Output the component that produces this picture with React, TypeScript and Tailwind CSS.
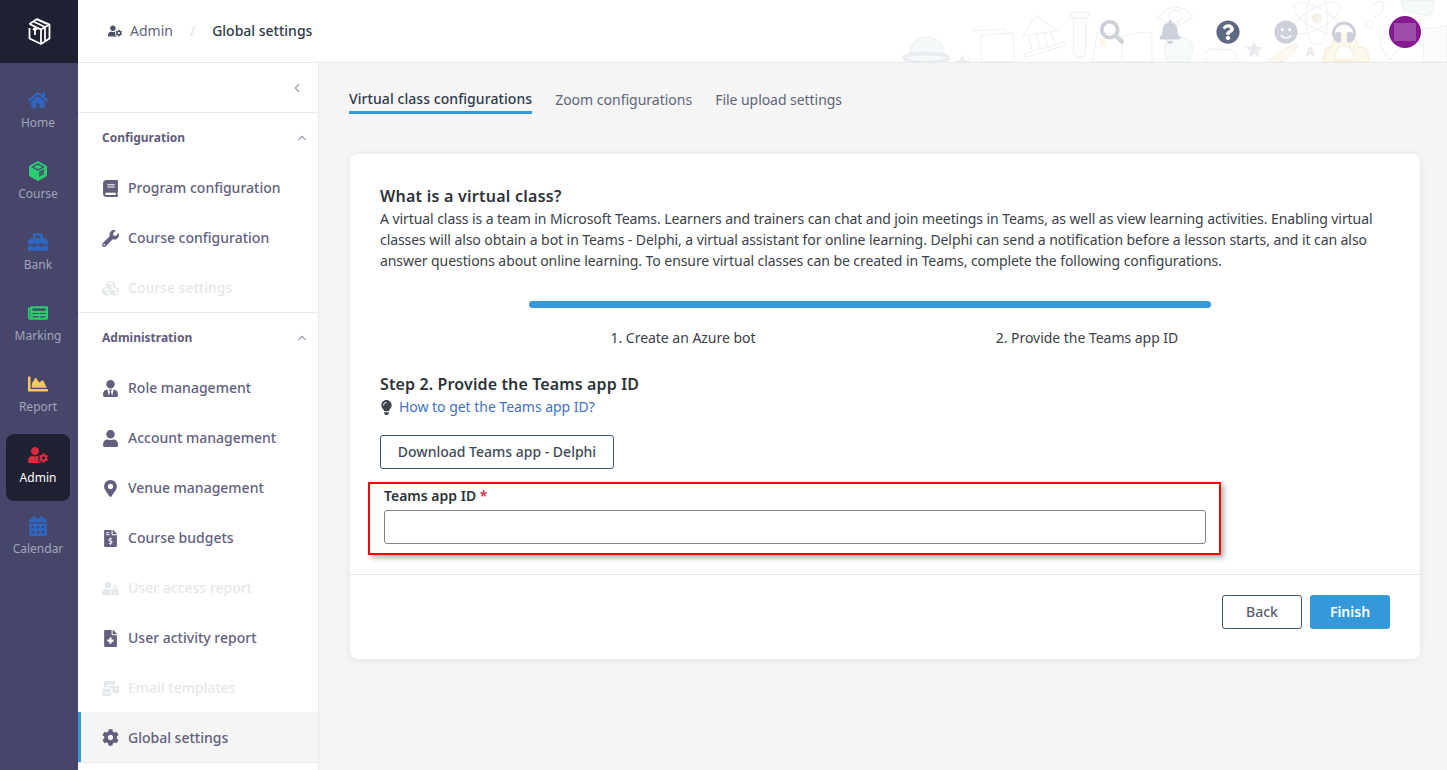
import type { IconType } from 'react-icons';
import { ChevronUp, ChevronLeft } from 'lucide-react';
import {
  FaHome, FaToolbox, FaNewspaper, FaChartArea, FaUserCog, FaCalendarAlt,
  FaBook, FaWrench, FaCubes, FaUserTie, FaUser, FaMapMarkerAlt, FaFileInvoiceDollar,
  FaUserLock, FaFileMedical, FaMailBulk, FaCog, FaSearch, FaBell, FaQuestionCircle,
  FaSmile, FaHeadphones, FaLightbulb,
} from 'react-icons/fa';

function CourseIcon({ className }: { className?: string }) {
  return (
    <svg className={className} viewBox="0 0 20 20">
      <path d="M10 0 L19 5 L19 15 L10 20 L1 15 L1 5 Z" fill="currentColor" />
      <path d="M10 3 L15.5 6 L10 9 L4.5 6 Z" fill="none" stroke="#45466a" strokeWidth="1.2" />
      <path d="M11 10.5 L16 7.8 L16 13.3 L11 16 Z" fill="#45466a" opacity="0.75" />
    </svg>
  );
}

const railItems: { label: string; icon: React.ComponentType<{ className?: string }>; color: string; active?: boolean }[] = [
  { label: 'Home', icon: FaHome, color: 'text-[#2f66c0]' },
  { label: 'Course', icon: CourseIcon, color: 'text-[#2ecc71]' },
  { label: 'Bank', icon: FaToolbox, color: 'text-[#2f66c0]' },
  { label: 'Marking', icon: FaNewspaper, color: 'text-[#2ecc71]' },
  { label: 'Report', icon: FaChartArea, color: 'text-[#f9c85c]' },
  { label: 'Admin', icon: FaUserCog, color: 'text-[#dc2a3e]', active: true },
  { label: 'Calendar', icon: FaCalendarAlt, color: 'text-[#2f66c0]' },
];

const configItems: { label: string; icon: IconType; disabled?: boolean }[] = [
  { label: 'Program configuration', icon: FaBook },
  { label: 'Course configuration', icon: FaWrench },
  { label: 'Course settings', icon: FaCubes, disabled: true },
];

const adminItems: { label: string; icon: IconType; disabled?: boolean; active?: boolean }[] = [
  { label: 'Role management', icon: FaUserTie },
  { label: 'Account management', icon: FaUser },
  { label: 'Venue management', icon: FaMapMarkerAlt },
  { label: 'Course budgets', icon: FaFileInvoiceDollar },
  { label: 'User access report', icon: FaUserLock, disabled: true },
  { label: 'User activity report', icon: FaFileMedical },
  { label: 'Email templates', icon: FaMailBulk, disabled: true },
  { label: 'Global settings', icon: FaCog, active: true },
];

function Logo() {
  return (
    <svg width="23" height="27" viewBox="0 0 23 27" fill="none" stroke="white" strokeWidth="1.8" strokeLinejoin="round">
      <path d="M1.5 6 L9 1 L21.5 6.5 L21.5 20.5 L13 26 L1.5 20.5 L1.5 10" />
      <path d="M1.5 6 L13 11.5 L21.5 6.5 M13 11.5 L13 26" />
      <path d="M5.5 3.5 L17 9 M9 1.5 L19 6 M17 9.5 L17 23" />
      <path d="M7 10 L7 17 M5 12 L7 9.5 L9 12" />
    </svg>
  );
}

// faint doodles behind the header icons
function HeaderDoodles() {
  return (
    <svg className="absolute right-0 top-0" width="567" height="62" viewBox="0 0 1568 171" fill="none" stroke="#eef0f3" strokeWidth="3">
      <circle cx="130" cy="150" r="48" fill="#f5f9f9" />
      <ellipse cx="128" cy="160" rx="62" ry="12" stroke="#eaecef" strokeWidth="9" />
      <path d="M228 152 l6 14 15 2 -10 10 -22 0 -10 -10 15 -2z" fill="#e8eaee" stroke="none" />
      <path d="M255 85 L345 80 L348 92 M278 98 L368 90 L372 171 L282 171 Z" fill="#fff" />
      <path d="M395 100 L432 42 L490 85 Z M398 150 L510 115 L512 125 L402 158 Z M410 100 L422 145 M432 92 L444 138 M452 86 L464 130 M472 82 L484 124" />
      <path d="M527 40 Q527 34 535 34 L570 34 Q577 34 577 42 Q577 50 570 50 L535 50 Q527 50 527 40 Z M535 50 L535 145 Q552 172 570 145 L570 50" fill="#fbfdfd" />
      <path d="M590 160 L600 92 Q640 88 672 100 Q710 85 752 92 L752 171 L590 171 Z M672 100 L668 171" fill="#fff" />
      <rect x="608" y="105" width="16" height="22" fill="#fdf6e8" stroke="none" />
      <path d="M770 45 Q815 -5 865 45 Q815 95 770 45 Z" />
      <circle cx="817" cy="45" r="18" />
      <path d="M785 140 Q785 100 825 100 Q865 100 865 140 L855 171 L795 171 Z" fill="#f6fafa" />
      <path d="M905 171 Q890 135 925 135 Q945 140 960 135 Q995 140 980 171 M945 135 L945 122" />
      <path d="M1035 113 l7 16 17 1 -13 11 4 17 -15 -9 -15 9 4 -17 -13 -11 17 -1z" fill="#e8eaee" stroke="none" />
      <path d="M1070 171 L1135 125 L1155 122 L1145 145 L1110 171 Z" fill="#fdf9f1" stroke="#f6f0e3" />
      <ellipse cx="1208" cy="50" rx="30" ry="75" />
      <ellipse cx="1208" cy="50" rx="72" ry="28" transform="rotate(30 1208 50)" />
      <ellipse cx="1208" cy="50" rx="72" ry="28" transform="rotate(-30 1208 50)" />
      <circle cx="1208" cy="50" r="13" fill="#f7f3e4" />
      <text x="1190" y="156" fontSize="36" fontWeight="700" fill="#e6e8ec" stroke="none" fontFamily="'Noto Sans',sans-serif" textAnchor="middle">A</text>
      <path d="M1225 171 L1232 135 Q1245 130 1248 128 Q1255 95 1285 95 Q1315 95 1322 128 L1345 135 L1355 171 Z" fill="#fdf8ec" stroke="#f8f0dd" strokeWidth="5" />
      <path d="M1258 165 Q1260 125 1285 125 Q1310 125 1312 165 Z" fill="#fff" stroke="#f8f0dd" strokeWidth="4" />
      <path d="M1362 20 Q1375 -5 1392 8 Q1400 25 1375 45 M1372 50 L1368 42" />
      <circle cx="1355" cy="68" r="10" />
      <path d="M1410 165 Q1370 115 1388 98 Q1405 88 1418 110 L1440 130 Z" />
      <path d="M1440 0 L1535 0 L1522 45 L1450 30 Z" fill="#f5fafa" />
      <path d="M1500 80 L1568 72 L1568 171 L1505 171 Z" fill="#fafcfc" />
    </svg>
  );
}

function SectionHeader({ title }: { title: string }) {
  return (
    <div className="flex h-[50px] items-center justify-between pl-6 pr-[9px]">
      <span className="text-xs font-bold text-[#5f5c7c]">{title}</span>
      <ChevronUp className="h-[14px] w-[14px] text-[#a6a8b6]" />
    </div>
  );
}

function SideItem({ label, icon: Icon, disabled, active }: { label: string; icon: IconType; disabled?: boolean; active?: boolean }) {
  return (
    <div
      className={`flex h-[50px] items-center gap-[9px] border-l-[3px] pl-[21px] text-sm font-medium ${
        active ? '-mt-px border-[#3498db] bg-[#f5f5f5] pt-px' : 'border-transparent'
      } ${disabled ? 'text-[#e5e8ea]' : 'text-[#625f7f]'}`}
    >
      <span className="flex w-[17px] justify-center">
        <Icon className="h-[17px] w-[17px]" />
      </span>
      {label}
    </div>
  );
}

export default function App() {
  return (
    <div className="flex h-screen overflow-hidden bg-[#f5f5f5] font-['Noto_Sans',sans-serif] text-sm text-[#2d3339]">
      {/* Rail */}
      <aside className="flex w-[78px] shrink-0 flex-col bg-[#45466a]">
        <div className="flex h-[63px] items-center justify-center bg-[#1f2032]">
          <Logo />
        </div>
        <nav className="flex flex-col items-center pr-[2px] pt-[16px]">
          {railItems.map(({ label, icon: Icon, color, active }) => (
            <div
              key={label}
              className={`mb-1 flex h-[67px] w-16 flex-col items-center gap-[5px] rounded-lg pt-[11px] ${active ? 'bg-[#1f2032]' : ''}`}
            >
              <Icon className={`h-5 w-5 ${color}`} />
              <span className={`text-xs ${active ? 'text-white' : 'text-[#a3a5b9]'}`}>{label}</span>
            </div>
          ))}
        </nav>
      </aside>

      <div className="flex min-w-0 flex-1 flex-col">
        {/* Header */}
        <header className="relative flex h-[63px] shrink-0 items-center border-b border-[#e8e9ec] bg-white pl-[30px] pr-[26px]">
          <HeaderDoodles />
          <FaUserCog className="h-[14px] w-[14px] text-[#4b5163]" />
          <span className="ml-2 text-sm text-[#5d6478]">Admin</span>
          <span className="mx-[17px] text-sm text-[#dfe1e5]">/</span>
          <span className="text-sm font-medium text-[#2f3a4b]">Global settings</span>
          <div className="relative ml-auto flex items-center gap-[34px] pt-px">
            <FaSearch className="h-6 w-6 text-[#cdd0d8]" />
            <FaBell className="h-6 w-6 text-[#cdd0d8]" />
            <FaQuestionCircle className="h-6 w-6 text-[#5e6a84]" />
            <FaSmile className="h-6 w-6 text-[#cdd0d8]" />
            <FaHeadphones className="h-6 w-6 text-[#cdd0d8]" />
            <div className="-ml-px flex h-8 w-8 items-center justify-center rounded-full bg-[#861a91]">
              <div className="h-[18px] w-[22px] bg-[#a04cab]" />
            </div>
          </div>
        </header>

        <div className="flex min-h-0 flex-1">
          {/* Sub navigation */}
          <aside className="w-[241px] shrink-0 border-r border-[#e8e9ec] bg-white">
            <div className="flex h-[50px] items-center justify-end border-b border-[#e8e9ec] pr-[14px]">
              <ChevronLeft className="h-[14px] w-[14px] text-[#9a9cad]" />
            </div>
            <SectionHeader title="Configuration" />
            {configItems.map((item) => (
              <SideItem key={item.label} {...item} />
            ))}
            <div className="mt-[-1px] border-b border-[#e8e9ec]" />
            <SectionHeader title="Administration" />
            {adminItems.map((item) => (
              <SideItem key={item.label} {...item} />
            ))}
            <div className="border-b border-[#e8e9ec]" />
          </aside>

          {/* Content */}
          <main className="min-w-0 flex-1 pl-[30px] pr-[27px]">
            <div className="flex h-[51px] items-end gap-[23px]">
              <div className="border-b-[3px] border-[#3498db] pb-[2px] font-medium tracking-[0.07px] text-[#2f3a4b]">Virtual class configurations</div>
              <div className="pb-[4px] text-[#5d6478]">Zoom configurations</div>
              <div className="pb-[4px] tracking-[-0.05px] text-[#5d6478]">File upload settings</div>
            </div>

            <section className="ml-px mt-10 rounded-lg bg-white pt-[30px] shadow-[0_1px_8px_rgba(0,0,0,0.08)]">
              <div className="px-[30px]">
                <h2 className="text-base leading-6 font-semibold tracking-[0.25px] text-[#2d3339]">What is a virtual class?</h2>
                <p className="leading-[21px] tracking-[-0.07px] text-[#3b4148]">
                  A virtual class is a team in Microsoft Teams. Learners and trainers can chat and join meetings in Teams, as well as view learning activities. Enabling virtual classes will also obtain a bot in Teams - Delphi, a virtual assistant for online learning. Delphi can send a notification before a lesson starts, and it can also answer questions about online learning. To ensure virtual classes can be created in Teams, complete the following configurations.
                </p>

                <div className="ml-[149px] mt-[30px] h-[7px] w-[682px] rounded-full bg-[#3498db]" />
                <div className="ml-[101px] mt-[20px] grid w-[808px] grid-cols-2 text-center leading-5 tracking-[-0.03px] text-[#3b4148]">
                  <span>1. Create an Azure bot</span>
                  <span>2. Provide the Teams app ID</span>
                </div>

                <h3 className="mt-[24px] text-base leading-6 font-semibold tracking-[0.13px] text-[#2d3339]">Step 2. Provide the Teams app ID</h3>
                <div className="-ml-px mt-[1px] flex items-center gap-[5px] leading-5">
                  <FaLightbulb className="h-[15px] w-[15px] text-[#3f4650]" />
                  <span className="tracking-[-0.03px] text-[#3f72c4]">How to get the Teams app ID?</span>
                </div>

                <button className="mt-[18px] flex h-[34px] w-[234px] items-center justify-center rounded-[3px] border border-[#3f5468] font-medium text-[#3f4a58]">
                  Download Teams app - Delphi
                </button>

                <div className="-ml-3 mt-[13px] w-[853px] border-2 border-[#ff0000] pb-[9px] pl-[14px] pr-[13px] pt-[2px] shadow-[3px_3px_5px_rgba(0,0,0,0.3)]">
                  <div className="leading-5 font-semibold text-[#2d3339]">
                    Teams app ID <span className="text-[#dc2a3e]">*</span>
                  </div>
                  <input className="mt-1 block h-[34px] w-[822px] rounded-[3px] border border-[#7d8288] bg-white" />
                </div>
              </div>

              <div className="mt-[19px] flex justify-end gap-2 border-t border-[#e8e9ec] pb-[30px] pr-[30px] pt-5">
                <button className="flex h-[34px] w-20 items-center justify-center rounded-[3px] border border-[#3f5468] font-medium text-[#56606c]">Back</button>
                <button className="flex h-[34px] w-20 items-center justify-center rounded-[3px] bg-[#3498db] font-semibold text-white">Finish</button>
              </div>
            </section>
          </main>
        </div>
      </div>
    </div>
  );
}
